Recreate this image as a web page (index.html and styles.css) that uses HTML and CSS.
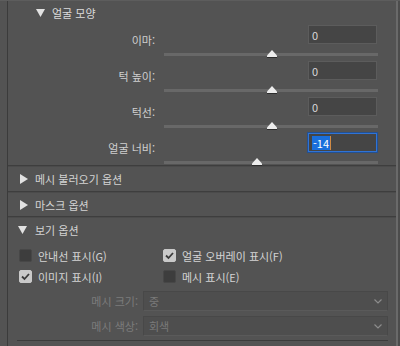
FILE: index.html
```html
<!DOCTYPE html>
<html lang="ko">
<head>
<meta charset="utf-8">
<link rel="stylesheet" href="styles.css">
</head>
<body>
<div class="app">
  <div class="gutter"></div>
  <div class="panel">
    <div class="subhead">
      <svg class="tri" width="9" height="8" viewBox="0 0 9 8"><polygon points="0,0 9,0 4.5,8" /></svg>
      <span>얼굴 모양</span>
    </div>

    <div class="srow">
      <div class="line"><span class="lbl">이마:</span><span class="num">0</span></div>
      <div class="track"><svg class="thumb" style="left:50.5%" width="10" height="8" viewBox="0 0 10 8"><polygon class="sh" points="0,8 10,8 10,6 0,6"/><polygon class="fg" points="5,0 10,5.5 10,7 0,7 0,5.5"/></svg></div>
    </div>
    <div class="srow">
      <div class="line"><span class="lbl">턱 높이:</span><span class="num">0</span></div>
      <div class="track"><svg class="thumb" style="left:50.5%" width="10" height="8" viewBox="0 0 10 8"><polygon class="sh" points="0,8 10,8 10,6 0,6"/><polygon class="fg" points="5,0 10,5.5 10,7 0,7 0,5.5"/></svg></div>
    </div>
    <div class="srow">
      <div class="line"><span class="lbl">턱선:</span><span class="num">0</span></div>
      <div class="track"><svg class="thumb" style="left:50.5%" width="10" height="8" viewBox="0 0 10 8"><polygon class="sh" points="0,8 10,8 10,6 0,6"/><polygon class="fg" points="5,0 10,5.5 10,7 0,7 0,5.5"/></svg></div>
    </div>
    <div class="srow last">
      <div class="line"><span class="lbl">얼굴 너비:</span><span class="num focus"><span class="sel">-14</span><span class="caret"></span></span></div>
      <div class="track"><svg class="thumb" style="left:43.5%" width="10" height="8" viewBox="0 0 10 8"><polygon class="sh" points="0,8 10,8 10,6 0,6"/><polygon class="fg" points="5,0 10,5.5 10,7 0,7 0,5.5"/></svg></div>
    </div>

    <div class="sep"></div>
    <div class="head">
      <svg class="tri" width="8" height="10" viewBox="0 0 8 10"><polygon points="0,0 8,5 0,10" /></svg>
      <span>메시 불러오기 옵션</span>
    </div>
    <div class="sep"></div>
    <div class="head short">
      <svg class="tri" width="8" height="10" viewBox="0 0 8 10"><polygon points="0,0 8,5 0,10" /></svg>
      <span>마스크 옵션</span>
    </div>
    <div class="sep"></div>
    <div class="head open">
      <svg class="tri" width="9" height="8" viewBox="0 0 9 8"><polygon points="0,0 9,0 4.5,8" /></svg>
      <span>보기 옵션</span>
    </div>

    <div class="checks">
      <label class="chk"><span class="box"></span><span>안내선 표시(G)</span></label>
      <label class="chk"><span class="box on"><svg width="13" height="13" viewBox="0 0 13 13"><polyline points="3,6.5 5.5,9 10,4" /></svg></span><span>얼굴 오버레이 표시(F)</span></label>
      <label class="chk"><span class="box on"><svg width="13" height="13" viewBox="0 0 13 13"><polyline points="3,6.5 5.5,9 10,4" /></svg></span><span>이미지 표시(I)</span></label>
      <label class="chk"><span class="box"></span><span>메시 표시(E)</span></label>
    </div>

    <div class="selrow">
      <span class="slbl">메시 크기:</span>
      <div class="select"><span>중</span><svg class="chev" width="8" height="5" viewBox="0 0 8 5"><polyline points="0.5,0.5 4,4 7.5,0.5" /></svg></div>
    </div>
    <div class="selrow">
      <span class="slbl">메시 색상:</span>
      <div class="select"><span>회색</span><svg class="chev" width="8" height="5" viewBox="0 0 8 5"><polyline points="0.5,0.5 4,4 7.5,0.5" /></svg></div>
    </div>
    <div class="bottomline"></div>
  </div>
  <div class="scroll"></div>
</div>
</body>
</html>
```

FILE: styles.css
```css
* { box-sizing: border-box; }
html, body { margin: 0; padding: 0; }
body {
  width: 400px;
  height: 346px;
  overflow: hidden;
  background: #535353;
  font-family: "Noto Sans CJK KR", "Noto Sans", sans-serif;
  font-size: 11px;
  color: #d6d6d6;
}
.app {
  display: flex;
  height: 346px;
  border-top: 1px solid #5d5d5d;
}
.gutter {
  width: 7px;
  flex: none;
  background: #535353;
}
.panel {
  width: 389px;
  flex: none;
  border-left: 1px solid #3b3b3b;
  display: flex;
  flex-direction: column;
}
.scroll {
  width: 4px;
  flex: none;
  border-left: 2px solid #6a6a6a;
  background: #4c4c4c;
}
.tri { flex: none; fill: #e2e2e2; }
.subhead {
  height: 24px;
  display: flex;
  align-items: center;
  padding-left: 28px;
  gap: 7px;
  line-height: 14px;
  color: #dcdcdc;
}
.srow {
  height: 36px;
  display: flex;
  flex-direction: column;
}
.srow.last { height: 32px; }
.line {
  height: 19px;
  display: flex;
  align-items: flex-start;
}
.lbl {
  width: 147px;
  text-align: right;
  margin-top: 8px;
  line-height: 14px;
  color: #cfcfcf;
}
.num {
  margin-left: auto;
  margin-right: 19px;
  width: 69px;
  height: 19px;
  background: #454545;
  border: 1px solid #5c5c5c;
  padding-left: 3px;
  display: flex;
  align-items: center;
  line-height: 14px;
  color: #d8d8d8;
}
.num.focus {
  border-color: #2f73d6;
  box-shadow: 0 0 0 1px #24508f;
}
.sel {
  background: #1a6fdc;
  color: #ffffff;
  padding: 0 1px;
  line-height: 14px;
}
.caret {
  width: 1px;
  height: 14px;
  background: #d08a44;
}
.track {
  position: relative;
  margin-top: 9px;
  margin-left: 156px;
  width: 214px;
  height: 3px;
  background: #686868;
}
.thumb {
  position: absolute;
  top: -3px;
  transform: translateX(-50%);
}
.thumb .fg { fill: #ececec; }
.thumb .sh { fill: #2c2c2c; }
.sep {
  height: 2px;
  flex: none;
  border-top: 1px solid #3e3e3e;
  border-bottom: 1px solid #4b4b4b;
}
.head {
  height: 24px;
  display: flex;
  align-items: center;
  padding-left: 12px;
  gap: 7px;
  line-height: 14px;
  color: #d4d4d4;
}
.head.short { height: 23px; }
.head.open { padding-left: 10px; gap: 8px; }
.checks {
  display: grid;
  grid-template-columns: 144px 1fr;
  grid-auto-rows: 21px;
  padding-top: 3px;
  padding-left: 11px;
}
.chk {
  display: flex;
  align-items: center;
  gap: 6px;
  line-height: 14px;
  color: #d4d4d4;
}
.box {
  width: 13px;
  height: 13px;
  flex: none;
  border-radius: 2px;
  background: #3d3d3d;
  border: 1px solid #474747;
  display: flex;
}
.box.on {
  background: #c9c9c9;
  border-color: #c9c9c9;
}
.box svg {
  margin: -1px;
  fill: none;
  stroke: #3a3a3a;
  stroke-width: 1.8;
}
.selrow {
  display: flex;
  align-items: center;
  margin-top: 4px;
  height: 20px;
}
.selrow + .selrow { margin-top: 5px; }
.slbl {
  width: 130px;
  text-align: right;
  line-height: 14px;
  color: #7c7c7c;
}
.select {
  margin-left: 5px;
  width: 245px;
  height: 20px;
  background: #4e4e4e;
  border: 1px solid #484848;
  border-bottom-color: #5a5a5a;
  display: flex;
  align-items: center;
  padding-left: 5px;
  padding-right: 5px;
  line-height: 14px;
  color: #7a7a7a;
}
.chev {
  margin-left: auto;
  fill: none;
  stroke: #8c8c8c;
  stroke-width: 1.2;
}
.bottomline {
  margin-top: 4px;
  margin-left: 9px;
  margin-right: 8px;
  height: 1px;
  background: #3b3b3b;
}
```
